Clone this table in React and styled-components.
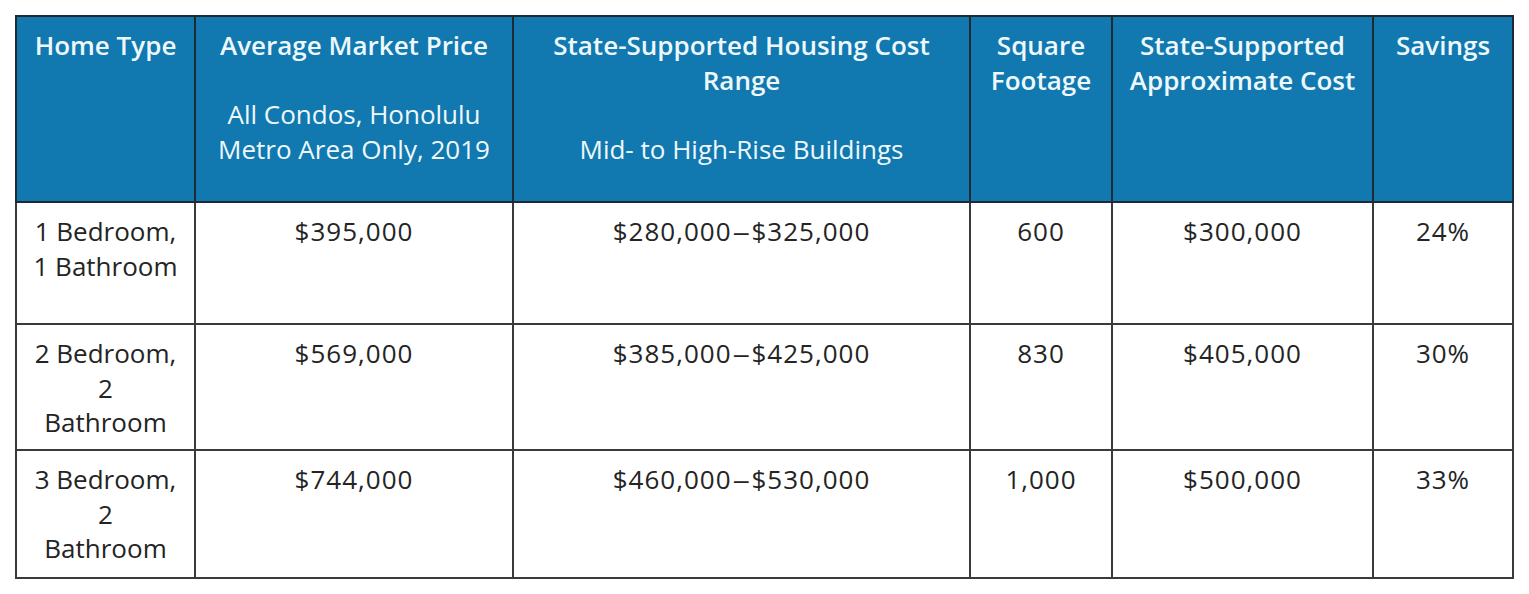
import React from "react";
import styled, { createGlobalStyle } from "styled-components";

const Global = createGlobalStyle`
  html, body { margin: 0; padding: 0; background: #ffffff; }
  body { font-family: "Open Sans", "Noto Sans", sans-serif; }
`;

const Page = styled.div`
  padding: 15px 0 0 15px;
`;

const Table = styled.table`
  border-collapse: collapse;
  table-layout: fixed;
  width: 1497px;
  border: 2px solid #2e2e2e;
`;

const Head = styled.th`
  background: #1178b0;
  color: #eef8fb;
  font-weight: 600;
  font-size: 26px;
  line-height: 34.5px;
  vertical-align: top;
  text-align: center;
  padding: 11px 8px 0;
  border: 2px solid #1e2a33;
  height: 186px;
  box-sizing: border-box;
`;

const Sub = styled.div`
  font-weight: 400;
  margin-top: 34.5px;
`;

const Cell = styled.td`
  color: #242424;
  font-size: 26px;
  line-height: 34.5px;
  letter-spacing: ${(p) => (p.$num ? "1px" : "0")};
  vertical-align: top;
  text-align: center;
  padding: 11px 6px 0;
  border: 2px solid #3a3a3a;
  height: ${(p) => p.$h}px;
  box-sizing: border-box;
`;

const Dash = styled.span`
  display: inline-block;
  transform: scaleX(1.35);
  margin: 0 3px;
`;

const cols = [179, 318, 457, 142, 261, 140];

const rows = [
  { h: 122, cells: ["1 Bedroom,\n1 Bathroom", "$395,000", "$280,000–$325,000", "600", "$300,000", "24%"] },
  { h: 126, cells: ["2 Bedroom,\n2\nBathroom", "$569,000", "$385,000–$425,000", "830", "$405,000", "30%"] },
  { h: 128, cells: ["3 Bedroom,\n2\nBathroom", "$744,000", "$460,000–$530,000", "1,000", "$500,000", "33%"] },
];

const Value = ({ text }) => {
  if (text.includes("–")) {
    const [a, b] = text.split("–");
    return (
      <div>
        {a}
        <Dash>–</Dash>
        {b}
      </div>
    );
  }
  return text.split("\n").map((t, i) => <div key={i}>{t}</div>);
};

export default function App() {
  return (
    <Page>
      <Global />
      <Table>
        <colgroup>
          {cols.map((w, i) => (
            <col key={i} style={{ width: w }} />
          ))}
        </colgroup>
        <thead>
          <tr>
            <Head>Home Type</Head>
            <Head>
              Average Market Price
              <Sub>All Condos, Honolulu Metro Area Only, 2019</Sub>
            </Head>
            <Head>
              State-Supported Housing Cost Range
              <Sub>Mid- to High-Rise Buildings</Sub>
            </Head>
            <Head>Square Footage</Head>
            <Head>State-Supported Approximate Cost</Head>
            <Head>Savings</Head>
          </tr>
        </thead>
        <tbody>
          {rows.map((r, i) => (
            <tr key={i}>
              {r.cells.map((c, j) => (
                <Cell key={j} $h={r.h} $num={j > 0}>
                  <Value text={c} />
                </Cell>
              ))}
            </tr>
          ))}
        </tbody>
      </Table>
    </Page>
  );
}
